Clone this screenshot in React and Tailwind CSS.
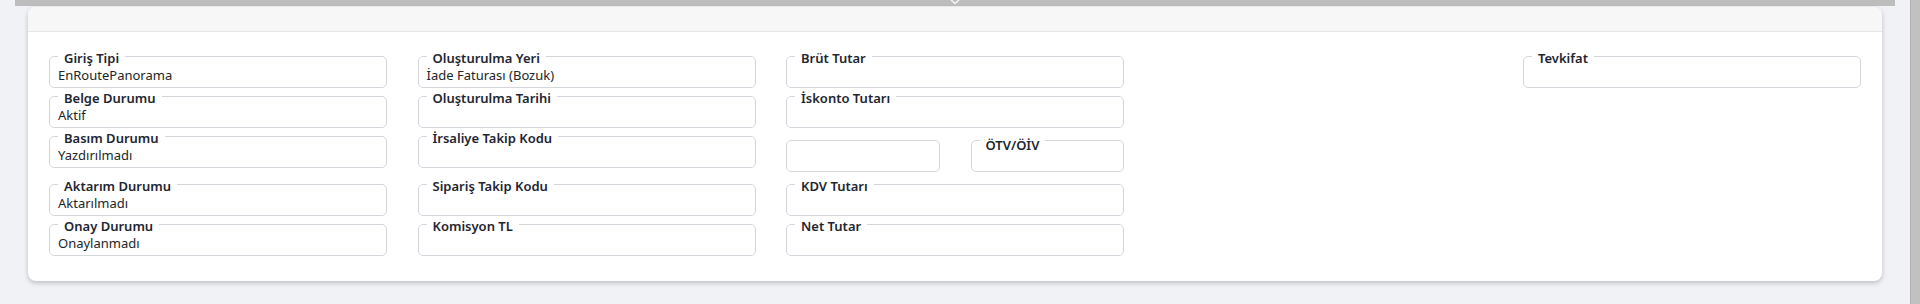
import React from "react";

const font = { fontFamily: '"Noto Sans", "Open Sans", sans-serif' };

function Field({ label, value, labelClass = "-mt-[7px]" }) {
  return (
    <div className="h-[32px] border border-[#d3d6db] rounded-[5px] pl-[8px] pr-2 bg-white">
      {label ? (
        <div className={`${labelClass} w-fit bg-white px-[6px] text-[13px] leading-[16px] font-semibold text-[#1e2530] whitespace-nowrap`}>
          {label}
        </div>
      ) : (
        <div className="h-[9px]" />
      )}
      <div className="mt-[1px] text-[13px] leading-[16px] text-[#212529] whitespace-nowrap">{value || "\u00a0"}</div>
    </div>
  );
}

function Row({ children, className = "" }) {
  return (
    <div className={`grid grid-cols-[repeat(5,338px)] gap-x-[30.5px] ${className}`}>{children}</div>
  );
}

export default function App() {
  return (
    <div className="w-[1920px] h-[304px] flex bg-[#f1f2f6] overflow-hidden" style={font}>
      <div className="flex-1 flex flex-col">
        <div className="mx-[15px] h-[6px] bg-[#bdbdbd] flex justify-center">
          <svg width="10" height="5" viewBox="0 0 10 5">
            <path d="M1 0 L5 3.5 L9 0" stroke="#f4f4f4" strokeWidth="1.6" fill="none" />
          </svg>
        </div>
        <div className="ml-[28px] mt-[1px] w-[1854px] h-[274px] bg-white rounded-[8px] shadow-[0_2px_5px_rgba(0,0,0,0.22)] overflow-hidden">
          <div className="h-[25px] bg-[#f7f7f7] border-b border-[#e6e6e6]" />
          <div className="pl-[21px] pt-[24px]">
            <Row>
              <Field label="Giriş Tipi" value="EnRoutePanorama" />
              <Field label="Oluşturulma Yeri" value="İade Faturası (Bozuk)" />
              <Field label="Brüt Tutar" />
              <div />
              <Field label="Tevkifat" />
            </Row>
            <Row className="mt-[8px]">
              <Field label="Belge Durumu" value="Aktif" />
              <Field label="Oluşturulma Tarihi" />
              <Field label="İskonto Tutarı" />
            </Row>
            <Row className="mt-[8px]">
              <Field label="Basım Durumu" value="Yazdırılmadı" />
              <Field label="İrsaliye Takip Kodu" />
              <div className="grid grid-cols-2 gap-x-[31px] mt-[4px]">
                <Field />
                <Field label="ÖTV/ÖİV" labelClass="-mt-[4px]" />
              </div>
            </Row>
            <Row className="mt-[12px]">
              <Field label="Aktarım Durumu" value="Aktarılmadı" />
              <Field label="Sipariş Takip Kodu" />
              <Field label="KDV Tutarı" />
            </Row>
            <Row className="mt-[8px]">
              <Field label="Onay Durumu" value="Onaylanmadı" />
              <Field label="Komisyon TL" />
              <Field label="Net Tutar" />
            </Row>
          </div>
        </div>
      </div>
      <div className="w-[10px] h-full bg-[#c1c1c1] border-l border-[#b0b0b0]" />
    </div>
  );
}
